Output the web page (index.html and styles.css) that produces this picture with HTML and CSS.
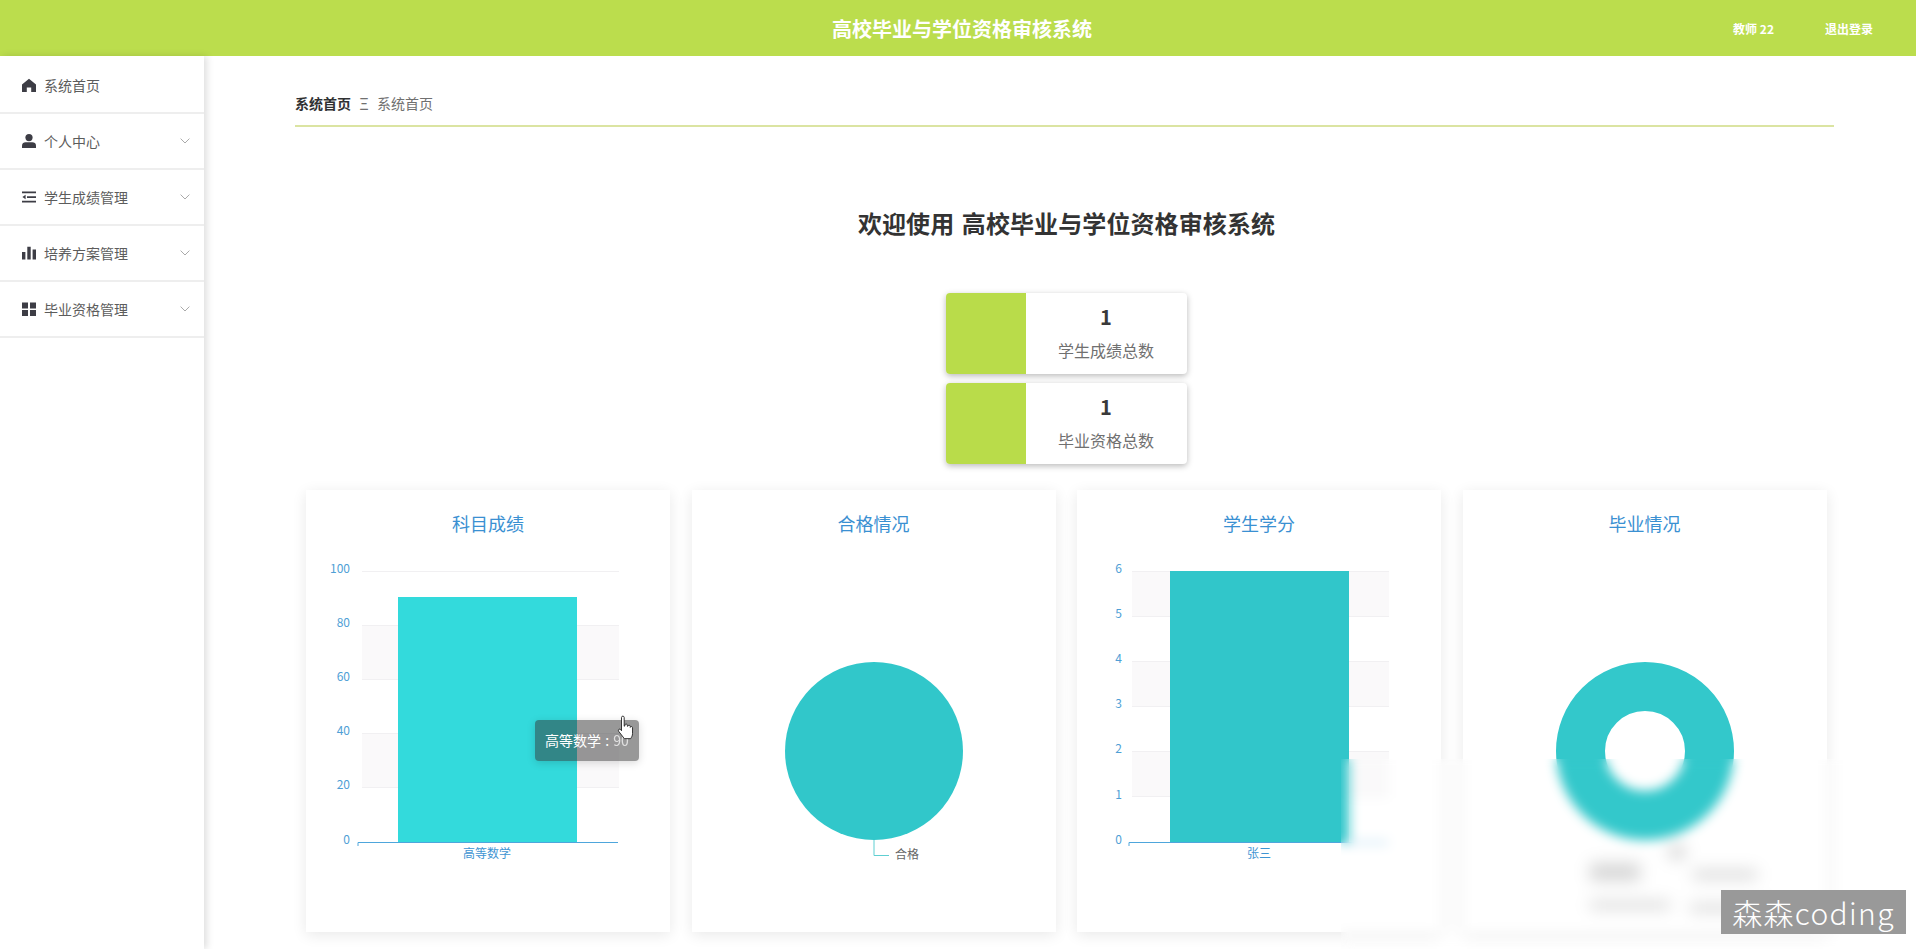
FILE: index.html
```html
<!DOCTYPE html>
<html lang="zh-CN">
<head>
  <meta charset="UTF-8" />
  <title>高校毕业与学位资格审核系统</title>
  <link rel="stylesheet" href="styles.css">
</head>
<body>

<header class="topbar">
  <span></span>
  <h1 class="topbar-title">高校毕业与学位资格审核系统</h1>
  <div class="topbar-user">
    <span>教师 22</span>
    <a href="#">退出登录</a>
  </div>
</header>

<div class="layout">
  <!-- Sidebar -->
  <aside class="sidebar">
    <a class="menu-item" href="#">
      <svg class="menu-icon" viewBox="0 0 14 14"><path d="M7 .8 14 6.6V14H9.2V9.4H4.8V14H0V6.6Z"/></svg>
      <span>系统首页</span>
    </a>
    <a class="menu-item" href="#">
      <svg class="menu-icon" viewBox="0 0 14 14"><circle cx="7" cy="3.6" r="3.6"/><path d="M0 14v-2.6C0 9.4 1.8 8.2 3.6 8.2h6.8c1.8 0 3.6 1.2 3.6 3.2V14Z"/></svg>
      <span>个人中心</span>
      <svg class="menu-arrow" viewBox="0 0 10 6"><path d="M.6.6 5 5 9.4.6"/></svg>
    </a>
    <a class="menu-item" href="#">
      <svg class="menu-icon" viewBox="0 0 14 14"><path d="M0 1.6h14v1.7H0ZM5 6.2h9v1.7H5ZM0 10.8h14v1.7H0ZM3.6 4.8v4.4L.4 7Z"/></svg>
      <span>学生成绩管理</span>
      <svg class="menu-arrow" viewBox="0 0 10 6"><path d="M.6.6 5 5 9.4.6"/></svg>
    </a>
    <a class="menu-item" href="#">
      <svg class="menu-icon" viewBox="0 0 14 14"><path d="M0 6h3.4v7.6H0ZM5.3 .8h3.4v12.8H5.3ZM10.6 3.6H14v10h-3.4Z"/></svg>
      <span>培养方案管理</span>
      <svg class="menu-arrow" viewBox="0 0 10 6"><path d="M.6.6 5 5 9.4.6"/></svg>
    </a>
    <a class="menu-item" href="#">
      <svg class="menu-icon" viewBox="0 0 14 14"><path d="M0 .4h6v6H0ZM8 .4h6v6H8ZM0 8h6v6H0ZM8 8h6v6H8Z"/></svg>
      <span>毕业资格管理</span>
      <svg class="menu-arrow" viewBox="0 0 10 6"><path d="M.6.6 5 5 9.4.6"/></svg>
    </a>
  </aside>

  <main class="content">
    <div class="crumbs">
      <b>系统首页</b>
      <i class="crumb-sep">Ξ</i>
      <span>系统首页</span>
    </div>

    <h2 class="welcome">欢迎使用 高校毕业与学位资格审核系统</h2>

    <div class="stats">
      <div class="stat-card">
        <div class="stat-color"></div>
        <div class="stat-body">
          <b>1</b>
          <span>学生成绩总数</span>
        </div>
      </div>
      <div class="stat-card">
        <div class="stat-color"></div>
        <div class="stat-body">
          <b>1</b>
          <span>毕业资格总数</span>
        </div>
      </div>
    </div>

    <div class="charts">
      <!-- 科目成绩 -->
      <section class="chart-card">
        <h3>科目成绩</h3>
        <svg class="chart" viewBox="0 0 364 395">
          <rect class="band" x="56" y="88" width="257" height="54"/>
          <rect class="band" x="56" y="197" width="257" height="54"/>
          <path class="grid" d="M56 34.500H313M56 88.500H313M56 142.500H313M56 196.500H313M56 250.500H313"/>
          <rect x="92" y="60" width="179" height="245" fill="#33dadc"/>
          <path class="axis" d="M52 309V305.500H312"/>
          <g class="y-labels">
            <text x="44" y="36">100</text>
            <text x="44" y="90">80</text>
            <text x="44" y="144">60</text>
            <text x="44" y="198">40</text>
            <text x="44" y="252">20</text>
            <text x="44" y="307">0</text>
          </g>
          <text class="x-label" x="181" y="321">高等数学</text>
        </svg>
        <div class="chart-tip">高等数学 : <span class="tip-value">90</span></div>
        <svg class="hand" viewBox="0 0 16 24"><path d="M4 2.200c0-1.600 2.400-1.600 2.400 0V10l.6-.3V9c0-1.300 2.200-1.300 2.200 0v1l.5 0c0-1.200 2.100-1.200 2.100 0v1c.2-1 2-1 2 .2v5.300c0 2-.8 3-1.600 4.500H6.500L1.500 14.500c-.9-1.200.6-2.600 1.700-1.600L4 14Z"/></svg>
      </section>

      <!-- 合格情况 -->
      <section class="chart-card">
        <h3>合格情况</h3>
        <svg class="chart" viewBox="0 0 364 395">
          <circle cx="182" cy="214" r="89" fill="#31c7ca"/>
          <path class="leader" d="M182 303V318.500H197"/>
          <text class="pie-label" x="203" y="322">合格</text>
        </svg>
      </section>

      <!-- 学生学分 -->
      <section class="chart-card">
        <h3>学生学分</h3>
        <svg class="chart" viewBox="0 0 364 395">
          <rect class="band" x="55" y="34" width="257" height="45"/>
          <rect class="band" x="55" y="124" width="257" height="45"/>
          <rect class="band" x="55" y="215" width="257" height="45"/>
          <path class="grid" d="M55 34.500H312M55 79.500H312M55 124.500H312M55 169.500H312M55 214.500H312M55 259.500H312"/>
          <rect x="93" y="34" width="179" height="271" fill="#31c6ca"/>
          <path class="axis" d="M52 309V305.500H311"/>
          <g class="y-labels">
            <text x="45" y="36">6</text>
            <text x="45" y="81">5</text>
            <text x="45" y="126">4</text>
            <text x="45" y="171">3</text>
            <text x="45" y="216">2</text>
            <text x="45" y="262">1</text>
            <text x="45" y="307">0</text>
          </g>
          <text class="x-label" x="182" y="321">张三</text>
        </svg>
      </section>

      <!-- 毕业情况 -->
      <section class="chart-card">
        <h3>毕业情况</h3>
        <svg class="chart" viewBox="0 0 364 395">
          <circle cx="182" cy="214" r="64.500" fill="none" stroke="#33c8cb" stroke-width="49"/>
          <g class="smudge">
            <rect x="206" y="308" width="16" height="14"/>
            <rect x="127" y="326" width="50" height="18"/>
            <rect x="230" y="333" width="64" height="9"/>
            <rect x="127" y="364" width="80" height="8"/>
            <rect x="227" y="367" width="80" height="8"/>
          </g>
        </svg>
      </section>
    </div>
  </main>
</div>

<div class="blur-patch"></div>
<div class="watermark">森森coding</div>

</body>
</html>
```

FILE: styles.css
```css
* {
  box-sizing: border-box;
}
html, body {
  height: 100%;
}
body {
  margin: 0;
  position: relative;
  overflow: hidden;
  background: #fff;
  color: #333;
  font-family: "Noto Sans CJK SC", "Open Sans", sans-serif;
}
a {
  color: inherit;
  text-decoration: none;
}

/* Top bar */
.topbar {
  height: 56px;
  padding-left: 8px;
  display: grid;
  grid-template-columns: 1fr auto 1fr;
  align-items: center;
  background: #bbdd4d;
  color: #fff;
}
.topbar-title {
  margin: 0;
  font-size: 20px;
  font-weight: 700;
}
.topbar-user {
  display: flex;
  justify-content: flex-end;
  gap: 51px;
  padding-right: 43px;
  font-size: 12px;
  font-weight: 700;
}

.layout {
  display: flex;
  height: calc(100% - 56px);
}

/* Sidebar */
.sidebar {
  width: 204px;
  flex: none;
  padding-top: 2px;
  background: #fff;
  box-shadow: 3px 0 7px rgba(0, 0, 0, .13);
}
.menu-item {
  height: 56px;
  padding: 0 14px 0 22px;
  display: flex;
  align-items: center;
  gap: 8px;
  border-bottom: 2px solid #eee;
  font-size: 14px;
  color: #5c5c5c;
}
.menu-icon {
  width: 14px;
  height: 14px;
  flex: none;
  fill: #3d3d45;
}
.menu-arrow {
  width: 10px;
  height: 6px;
  margin-left: auto;
  fill: none;
  stroke: #aaa;
  stroke-width: 1;
}

/* Main */
.content {
  flex: 1;
  min-width: 0;
  padding: 35px 82px 0 91px;
}
.crumbs {
  height: 36px;
  display: flex;
  align-items: flex-start;
  border-bottom: 2px solid #dbe4a2;
  font-size: 14px;
  line-height: 24px;
  color: #707070;
}
.crumbs b {
  color: #303133;
}
.crumb-sep {
  width: 26px;
  text-align: center;
  font-style: normal;
  font-size: 16px;
}
.welcome {
  margin: 80px 0 54px;
  padding-left: 4px;
  text-align: center;
  font-size: 24px;
  line-height: 32px;
  font-weight: 700;
  word-spacing: 2px;
  letter-spacing: .1px;
  color: #333;
}

.stats {
  display: flex;
  flex-direction: column;
  align-items: center;
  gap: 9px;
  padding-left: 3px;
}
.stat-card {
  width: 241px;
  height: 81px;
  display: flex;
  overflow: hidden;
  border-radius: 4px;
  background: #fff;
  box-shadow: 0 2px 6px rgba(0, 0, 0, .28);
}
.stat-color {
  width: 80px;
  background: #b9dc4a;
}
.stat-body {
  flex: 1;
  display: flex;
  flex-direction: column;
  align-items: center;
}
.stat-body b {
  margin-top: 10px;
  font-size: 20px;
  line-height: 28px;
  color: #3a3a3a;
}
.stat-body span {
  margin-top: 7px;
  font-size: 16px;
  line-height: 24px;
  color: #707070;
}

/* Chart cards */
.charts {
  margin-top: 26px;
  padding-left: 11px;
  display: grid;
  grid-template-columns: repeat(4, 364px);
  gap: 21.5px;
}
.chart-card {
  position: relative;
  height: 442px;
  background: #fff;
  box-shadow: 0 3px 14px rgba(0, 0, 0, .09);
}
.chart-card h3 {
  margin: 0;
  padding-top: 19px;
  height: 47px;
  text-align: center;
  font-size: 18px;
  line-height: 28px;
  font-weight: 400;
  color: #3a90d2;
}
.chart {
  display: block;
  width: 364px;
  height: 395px;
}
.band {
  fill: #faf9fa;
}
.grid {
  fill: none;
  stroke: #f1f0f2;
  stroke-width: 1;
}
.axis {
  fill: none;
  stroke: #4ea6dc;
  stroke-width: 1;
}
.y-labels text {
  font-size: 12px;
  text-anchor: end;
  fill: #4f9fd6;
}
.x-label {
  font-size: 12px;
  text-anchor: middle;
  fill: #3f95d3;
}
.leader {
  fill: none;
  stroke: #5fcfd2;
  stroke-width: 1;
}
.pie-label {
  font-size: 12px;
  fill: #666;
}
.smudge {
  filter: blur(6px);
}
.smudge rect {
  fill: #d6d6d6;
}

/* Hover tooltip and the pointer sitting on it */
.chart-tip {
  position: absolute;
  left: 229px;
  top: 230px;
  width: 104px;
  height: 41px;
  padding-left: 10px;
  border-radius: 4px;
  background: rgba(50, 50, 50, .5);
  box-shadow: 0 2px 8px rgba(0, 0, 0, .15);
  font-size: 14px;
  line-height: 41px;
  word-spacing: 1px;
  white-space: nowrap;
  color: #fff;
}
.tip-value {
  opacity: .7;
}
.hand {
  position: absolute;
  left: 311px;
  top: 225px;
  width: 18px;
  height: 27px;
  fill: #fff;
  stroke: #222;
  stroke-width: .8;
}

/* Blurred corner and watermark of the recording */
.blur-patch {
  position: absolute;
  left: 1341px;
  top: 759px;
  right: 0;
  bottom: 0;
  backdrop-filter: blur(6px);
}
.watermark {
  position: absolute;
  right: 10px;
  bottom: 15px;
  width: 185px;
  height: 44px;
  background: #999;
  color: #fff;
  font-size: 30px;
  font-weight: 300;
  letter-spacing: 1.3px;
  line-height: 44px;
  text-align: center;
  white-space: nowrap;
}
```
